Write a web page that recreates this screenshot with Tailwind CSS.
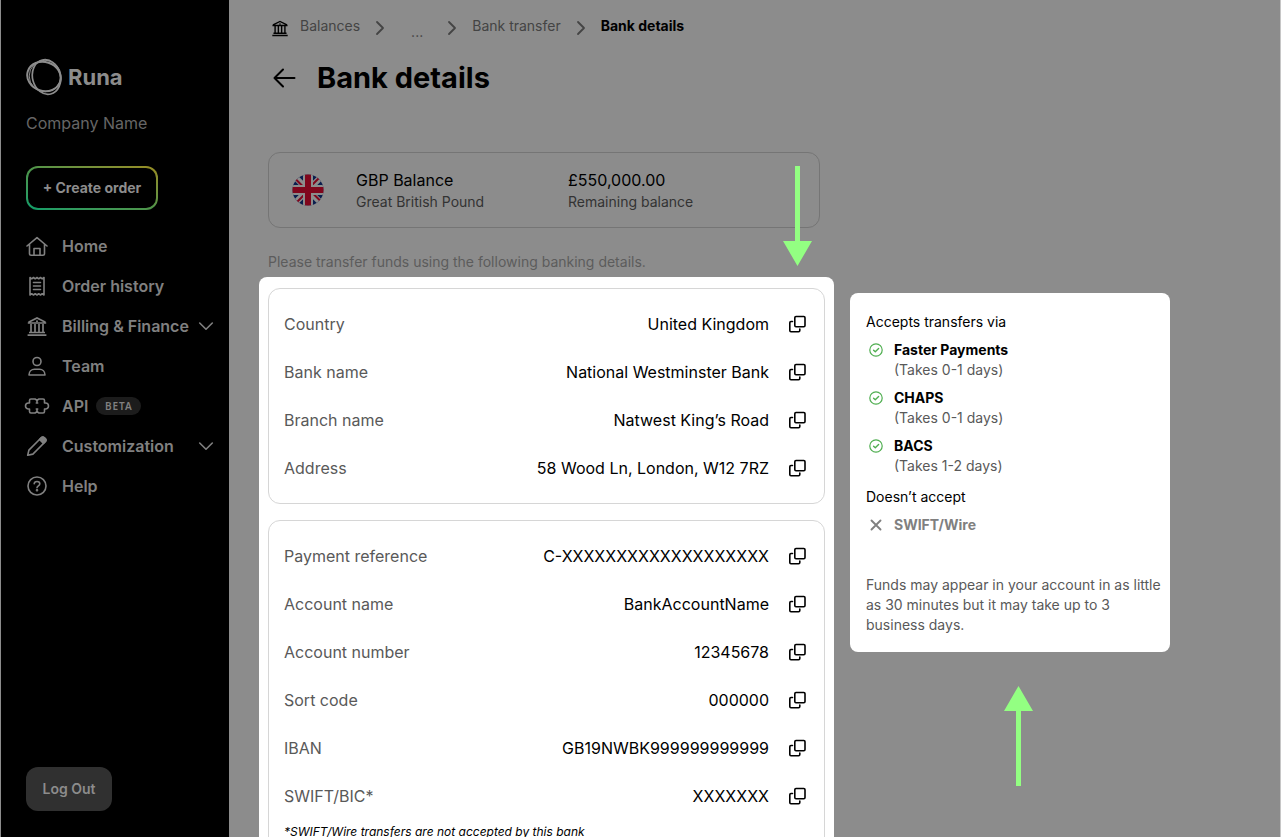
<!DOCTYPE html>
<html lang="en">
<head>
    <meta charset="UTF-8">
    <meta name="viewport" content="width=device-width, initial-scale=1.0">
    <title>Runa - Bank details</title>
    <script src="https://cdn.jsdelivr.net/npm/@tailwindcss/browser@4"></script>
</head>
<body class="bg-[#8c8c8c] font-['Inter',sans-serif] text-black">
    <!-- shared icons -->
    <svg class="hidden">
        <symbol id="copy" viewBox="0 0 24 24"><g fill="none" stroke="currentColor" stroke-width="1.6" stroke-linejoin="round" stroke-linecap="round"><rect x="9.8" y="4.5" width="10.2" height="10.2" rx="1.2"/><path d="M7.500 9.500H6a1.200 1.200 0 0 0-1.200 1.200V18.600a1.200 1.200 0 0 0 1.200 1.200h7.600a1.200 1.200 0 0 0 1.200-1.200V17"/></g></symbol>
        <symbol id="check" viewBox="0 0 16 16"><g fill="none" stroke="currentColor" stroke-width="1.2" stroke-linecap="round" stroke-linejoin="round"><circle cx="8" cy="8" r="6.200"/><path stroke-width="1.400" d="M5.600 8.200l1.700 1.600 3.300-3.200"/></g></symbol>
        <symbol id="bank" viewBox="0 0 22 22"><path d="M2.500 7.200L11 3l8.500 4.200M1.800 8h18.400M5 9v8M9 9v8M13 9v8M17 9v8M3 17.500h16M1.600 20.200h18.800" fill="none" stroke="currentColor" stroke-width="1.700"/><circle cx="11" cy="6.200" r="1" fill="currentColor"/></symbol>
        <symbol id="down" viewBox="0 0 16 16"><path d="M1.700 5L8 11.200 14.300 5" fill="none" stroke="currentColor" stroke-width="1.600" stroke-linecap="round" stroke-linejoin="round"/></symbol>
        <symbol id="right" viewBox="0 0 10 16"><path d="M2 2l6 6-6 6" fill="none" stroke="currentColor" stroke-width="1.800" stroke-linecap="round" stroke-linejoin="round"/></symbol>
    </svg>

    <div class="flex h-screen overflow-hidden border-l border-l-[#8c8c8c] border-r border-r-[#c6c6c6]">
        <!-- sidebar -->
        <aside class="flex w-[228px] shrink-0 flex-col bg-black pl-[25px] pr-[15px] pt-[58px] pb-[26px] text-[#808080]">
            <a href="#" class="flex h-[38px] items-center gap-1 text-[#8c8c8c]">
                <svg class="size-[38px]" viewBox="0 0 38 38" fill="none" stroke="currentColor">
                    <ellipse cx="18" cy="18.500" rx="17" ry="14.500" stroke-width="2" transform="rotate(18 18 18.500)"/>
                    <ellipse cx="20.500" cy="19" rx="14" ry="17.500" stroke-width="1.700" transform="rotate(-14 20.500 19)"/>
                    <circle cx="19" cy="18" r="15.800" stroke-width="1"/>
                </svg>
                <span class="text-[22px] font-bold">Runa</span>
            </a>
            <p class="mt-[15px] text-base leading-6 text-[#666]">Company Name</p>
            <button class="mt-[31px] h-11 w-[132px] rounded-xl bg-linear-to-tr from-[#009e6a] via-[#4f9449] to-[#998c20] p-0.5">
                <span class="flex h-full items-center justify-center rounded-[10px] bg-black text-sm font-bold text-[#8c8c8c]">+ Create order</span>
            </button>
            <nav class="mt-4 text-base font-semibold whitespace-nowrap">
                <a href="#" class="flex h-10 items-center">
                    <svg class="mr-3.5 size-[22px] shrink-0" viewBox="0 0 22 22" fill="none" stroke="currentColor" stroke-width="1.600" stroke-linejoin="round" stroke-linecap="round"><path d="M1 11L11 2.600 21 11M3.500 9.200v9.600a1.500 1.500 0 0 0 1.500 1.500h12a1.500 1.500 0 0 0 1.500-1.500V9.200M8 20v-6.500h6V20"/></svg>
                    Home
                </a>
                <a href="#" class="flex h-10 items-center">
                    <svg class="mr-3.5 size-[22px] shrink-0" viewBox="0 0 22 22" fill="none" stroke="currentColor" stroke-width="1.600" stroke-linejoin="round" stroke-linecap="round"><path d="M4 2.500l1.700 1.300 1.800-1.300 1.700 1.300L11 2.500l1.700 1.300 1.800-1.300 1.700 1.300L18 2.500v17.500l-1.800-1.300-1.700 1.300-1.800-1.300-1.700 1.300-1.800-1.300-1.700 1.300-1.800-1.300L4 20zM7.500 7.500h7M7.500 11h7M7.500 14.500h7"/></svg>
                    Order history
                </a>
                <a href="#" class="flex h-10 items-center">
                    <svg class="mr-3.5 size-[22px] shrink-0"><use href="#bank"/></svg>
                    Billing &amp; Finance
                    <svg class="ml-auto size-4 shrink-0"><use href="#down"/></svg>
                </a>
                <a href="#" class="flex h-10 items-center">
                    <svg class="mr-3.5 size-[22px] shrink-0" viewBox="0 0 22 22" fill="none" stroke="currentColor" stroke-width="1.600" stroke-linejoin="round"><circle cx="11" cy="6.500" r="4"/><path d="M3 20c0-3.800 2.600-5.700 5.500-5.700h5c2.900 0 5.500 1.900 5.500 5.700z"/></svg>
                    Team
                </a>
                <a href="#" class="flex h-10 items-center">
                    <svg class="mr-3.5 size-[22px] shrink-0 overflow-visible" viewBox="0 0 22 22" fill="none" stroke="currentColor" stroke-width="1.600" stroke-linejoin="round" stroke-linecap="round"><path d="M5 4h4l2 1.200L13 4h4a1.500 1.500 0 0 1 1.500 1.500V8h1a3 3 0 0 1 0 6h-1v2.500A1.500 1.500 0 0 1 17 18h-4l-2-1.200L9 18H5a1.500 1.500 0 0 1-1.500-1.500V14h-1a3 3 0 0 1 0-6h1V5.500A1.500 1.500 0 0 1 5 4z"/><path d="M11 5.500V8M11 14v2.500M10.300 8h1.400M10.300 14h1.400"/></svg>
                    API
                    <span class="ml-2 flex h-[18px] w-[45px] items-center justify-center rounded-full bg-[#1c1c1c] font-['Noto_Sans',sans-serif] text-[10px] font-semibold tracking-widest">BETA</span>
                </a>
                <a href="#" class="flex h-10 items-center">
                    <svg class="mr-3.5 size-[22px] shrink-0" viewBox="0 0 22 22" fill="none" stroke="currentColor" stroke-width="1.600" stroke-linejoin="round"><path d="M1.700 20.300l1.200-5.200L15.200 2.800a2.300 2.300 0 0 1 3.200 0l.8.800a2.300 2.300 0 0 1 0 3.200L6.900 19.100z"/><path d="M13.500 4.500l1.700-1.700a2.300 2.300 0 0 1 3.200 0l.8.800a2.300 2.300 0 0 1 0 3.200l-1.700 1.700z" fill="currentColor"/></svg>
                    Customization
                    <svg class="ml-auto size-4 shrink-0"><use href="#down"/></svg>
                </a>
                <a href="#" class="flex h-10 items-center">
                    <svg class="mr-3.5 size-[22px] shrink-0" viewBox="0 0 22 22" fill="none" stroke="currentColor" stroke-width="1.600" stroke-linecap="round"><circle cx="11" cy="11" r="9"/><path d="M8.200 8.800C8.300 7.200 9.400 6.500 11 6.500c1.700 0 2.800.9 2.800 2.300 0 2-2.800 2-2.800 3.900"/><circle cx="11" cy="15.300" r=".5" fill="currentColor"/></svg>
                    Help
                </a>
            </nav>
            <button class="mt-auto h-11 w-[86px] rounded-xl bg-[#303030] text-sm font-semibold text-[#8c8c8c]">Log Out</button>
        </aside>

        <main class="grow pl-[30px] pt-3.5">
            <nav class="flex h-6 items-center pl-3 text-sm text-[#444]">
                <svg class="mt-1 size-[18px] text-black"><use href="#bank"/></svg>
                <a href="#" class="ml-[11px]">Balances</a>
                <svg class="ml-[15px] mt-1 h-4 w-2.5"><use href="#right"/></svg>
                <a href="#" class="ml-[26px] mt-3">...</a>
                <svg class="ml-6 mt-1 h-4 w-2.5"><use href="#right"/></svg>
                <a href="#" class="ml-[15px]">Bank transfer</a>
                <svg class="ml-[15px] mt-1 h-4 w-2.5"><use href="#right"/></svg>
                <span class="ml-[15px] font-bold text-black">Bank details</span>
            </nav>
            <div class="mt-[22px] flex h-9 items-center gap-5 pl-3">
                <button aria-label="Back">
                    <svg class="size-[26px]" viewBox="0 0 26 26" fill="none" stroke="currentColor" stroke-width="2" stroke-linecap="round" stroke-linejoin="round"><path d="M23.500 13H3.500M12 4.500L3.500 13l8.500 8.500"/></svg>
                </button>
                <h1 class="text-[29px] font-bold">Bank details</h1>
            </div>

            <section class="ml-[9px] mt-14 flex h-[76px] w-[552px] items-center rounded-xl border border-[#757575] pl-[23px]">
                <svg class="size-8" viewBox="0 0 32 32">
                    <clipPath id="round"><circle cx="16" cy="16" r="15.500"/></clipPath>
                    <g clip-path="url(#round)">
                        <path fill="#0b1e4e" d="M0 0h32v32H0z"/>
                        <path stroke="#8c8c8c" stroke-width="6" d="M0 0l32 32M32 0L0 32"/>
                        <path stroke="#80061c" stroke-width="2" d="M0 1.500l14 14M32 30.500l-14-14M31 0L17 14M1 32l14-14"/>
                        <path stroke="#8c8c8c" stroke-width="10" d="M16 0v32M0 16h32"/>
                        <path stroke="#80061c" stroke-width="6" d="M16 0v32M0 16h32"/>
                    </g>
                </svg>
                <div class="ml-8 w-[212px]">
                    <p class="text-base leading-6">GBP Balance</p>
                    <p class="text-sm leading-5 text-[#333]">Great British Pound</p>
                </div>
                <div>
                    <p class="text-base leading-6">£550,000.00</p>
                    <p class="text-sm leading-5 text-[#333]">Remaining balance</p>
                </div>
            </section>
            <p class="ml-[9px] mt-6 text-sm leading-5 text-[#5c5c5c]">Please transfer funds using the following banking details.</p>

            <div class="mt-[5px] flex items-start gap-4">
                <div class="relative w-[575px] rounded-t-lg bg-white px-[9px] py-[11px]">
                    <dl class="rounded-xl border border-[#d6d6d6] py-[11px] px-[15px]">
                        <div class="flex h-12 items-center"><dt class="grow text-[#595959]">Country</dt><dd>United Kingdom</dd><button class="ml-4" aria-label="Copy country"><svg class="size-6"><use href="#copy"/></svg></button></div>
                        <div class="flex h-12 items-center"><dt class="grow text-[#595959]">Bank name</dt><dd>National Westminster Bank</dd><button class="ml-4" aria-label="Copy bank name"><svg class="size-6"><use href="#copy"/></svg></button></div>
                        <div class="flex h-12 items-center"><dt class="grow text-[#595959]">Branch name</dt><dd>Natwest King’s Road</dd><button class="ml-4" aria-label="Copy branch name"><svg class="size-6"><use href="#copy"/></svg></button></div>
                        <div class="flex h-12 items-center"><dt class="grow text-[#595959]">Address</dt><dd>58 Wood Ln, London, W12 7RZ</dd><button class="ml-4" aria-label="Copy address"><svg class="size-6"><use href="#copy"/></svg></button></div>
                    </dl>
                    <div class="mt-4 rounded-xl border border-[#d6d6d6] py-[11px] px-[15px]">
                        <dl>
                            <div class="flex h-12 items-center"><dt class="grow text-[#595959]">Payment reference</dt><dd>C-XXXXXXXXXXXXXXXXXXX</dd><button class="ml-4" aria-label="Copy payment reference"><svg class="size-6"><use href="#copy"/></svg></button></div>
                            <div class="flex h-12 items-center"><dt class="grow text-[#595959]">Account name</dt><dd>BankAccountName</dd><button class="ml-4" aria-label="Copy account name"><svg class="size-6"><use href="#copy"/></svg></button></div>
                            <div class="flex h-12 items-center"><dt class="grow text-[#595959]">Account number</dt><dd>12345678</dd><button class="ml-4" aria-label="Copy account number"><svg class="size-6"><use href="#copy"/></svg></button></div>
                            <div class="flex h-12 items-center"><dt class="grow text-[#595959]">Sort code</dt><dd>000000</dd><button class="ml-4" aria-label="Copy sort code"><svg class="size-6"><use href="#copy"/></svg></button></div>
                            <div class="flex h-12 items-center"><dt class="grow text-[#595959]">IBAN</dt><dd>GB19NWBK999999999999</dd><button class="ml-4" aria-label="Copy IBAN"><svg class="size-6"><use href="#copy"/></svg></button></div>
                            <div class="flex h-12 items-center"><dt class="grow text-[#595959]">SWIFT/BIC*</dt><dd>XXXXXXX</dd><button class="ml-4" aria-label="Copy SWIFT/BIC"><svg class="size-6"><use href="#copy"/></svg></button></div>
                        </dl>
                        <p class="text-xs leading-6 italic">*SWIFT/Wire transfers are not accepted by this bank</p>
                    </div>
                    <svg class="absolute right-[22px] bottom-full mb-[11px] h-[100px] w-[29px] fill-[#93ff82]" viewBox="0 0 29 100"><path d="M12 0h5v75h12L14.500 100 0 75h12z"/></svg>
                </div>

                <aside class="relative mt-4 w-80 rounded-lg bg-white px-4 pt-[19px] pb-[17px] text-sm leading-5">
                    <p>Accepts transfers via</p>
                    <ul class="mt-2 space-y-2">
                        <li class="flex gap-2.5 pl-0.5">
                            <svg class="mt-0.5 size-4 text-[#4fae50]"><use href="#check"/></svg>
                            <div><p class="font-bold">Faster Payments</p><p class="text-[#595959]">(Takes 0-1 days)</p></div>
                        </li>
                        <li class="flex gap-2.5 pl-0.5">
                            <svg class="mt-0.5 size-4 text-[#4fae50]"><use href="#check"/></svg>
                            <div><p class="font-bold">CHAPS</p><p class="text-[#595959]">(Takes 0-1 days)</p></div>
                        </li>
                        <li class="flex gap-2.5 pl-0.5">
                            <svg class="mt-0.5 size-4 text-[#4fae50]"><use href="#check"/></svg>
                            <div><p class="font-bold">BACS</p><p class="text-[#595959]">(Takes 1-2 days)</p></div>
                        </li>
                    </ul>
                    <p class="mt-[11px]">Doesn’t accept</p>
                    <div class="mt-2 flex gap-2.5 pl-0.5 font-bold text-[#808080]">
                        <svg class="mt-0.5 size-4" viewBox="0 0 16 16" fill="none" stroke="currentColor" stroke-width="1.900" stroke-linecap="round"><path d="M3.500 3.500l9 9M12.500 3.500l-9 9"/></svg>
                        SWIFT/Wire
                    </div>
                    <p class="-mr-2.5 mt-10 text-[#595959]">Funds may appear in your account in as little as 30 minutes but it may take up to 3 business days.</p>
                    <svg class="absolute left-[154px] top-full mt-[34px] h-[100px] w-[29px] fill-[#93ff82]" viewBox="0 0 29 100"><path d="M14.500 0L29 25H17v75h-5V25H0z"/></svg>
                </aside>
            </div>
        </main>
    </div>
</body>
</html>
